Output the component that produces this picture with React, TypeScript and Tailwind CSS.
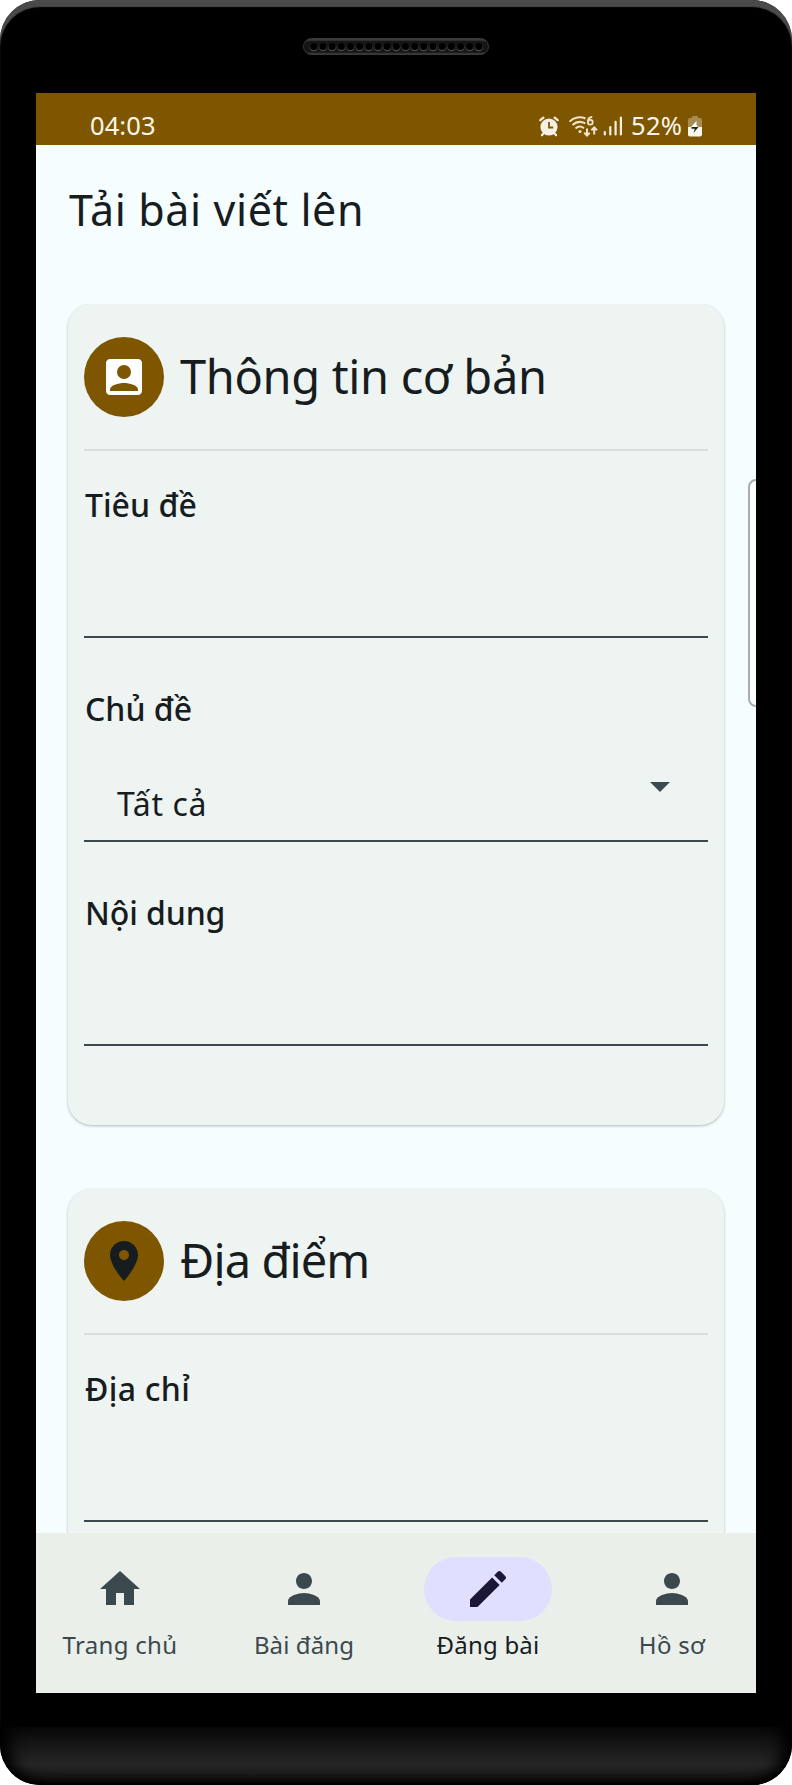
import type { ReactNode } from "react";

const HOLES = Array.from({ length: 19 }, (_, i) => i);

function Speaker() {
  return (
    <svg width="186" height="18" viewBox="0 0 186 18">
      <defs>
        <linearGradient id="grille" x1="0" y1="0" x2="0" y2="1">
          <stop offset="0" stopColor="#484848" />
          <stop offset="0.25" stopColor="#161616" />
          <stop offset="0.8" stopColor="#101010" />
          <stop offset="1" stopColor="#484848" />
        </linearGradient>
      </defs>
      <rect x="0.5" y="0.5" width="185" height="16" rx="8" fill="url(#grille)" stroke="#383838" />
      <rect x="2.5" y="3" width="181" height="11.500" rx="5.750" fill="#161616" />
      {HOLES.map((i) => (
        <g key={i}>
          <circle cx={10.8 + i * 9.17} cy="9.3" r="3.9" fill="#4a4a4a" />
          <circle cx={10.8 + i * 9.17} cy="8.5" r="3.6" fill="#000000" />
        </g>
      ))}
    </svg>
  );
}

function StatusIcons() {
  return (
    <svg width="84" height="22" viewBox="0 0 84 22" fill="none">
      <g fill="#f5f0e6" stroke="#f5f0e6">
        <circle cx="10" cy="11" r="8.600" stroke="none" />
        <path d="M4.400 17.500 2.900 19.200M15.600 17.500l1.500 1.700" strokeWidth="2.200" strokeLinecap="round" />
        <path d="M1.300 4.200 4.400 1.600M18.700 4.200 15.600 1.600" strokeWidth="2.200" strokeLinecap="round" />
        <path d="M10 6v5.500h4.200" fill="none" stroke="#7f5600" strokeWidth="1.800" />
      </g>
      <g stroke="#efe3cb" strokeWidth="2" fill="none">
        <path d="M30.500 5.600C35 1 41.500 .2 46.500 2.500" />
        <path d="M33.500 9C37 5.700 42 5.200 46.300 7.400" />
        <path d="M36.500 12.400c2.500-2.200 5.800-2.300 8.400-.2" />
        <path d="M53.200 1C50.300 1.200 48.900 3 48.900 5.700" strokeWidth="1.800" />
        <circle cx="51.300" cy="6.300" r="2.400" strokeWidth="1.800" />
        <circle cx="41" cy="15.500" r="1.500" fill="#efe3cb" stroke="none" />
        <path d="M48 12.500v7M45.300 16.800l2.700 2.800 2.700-2.800" />
        <path d="M55.200 18.500v-7M52.400 14.200l2.800-2.800 2.800 2.800" />
      </g>
      <g stroke="#f5f0e6" strokeWidth="2.200" strokeLinecap="round">
        <path d="M65.800 16.200v2.200M71.300 11v7.400M76.600 5.800v12.600M81.900 1.500v16.900" />
      </g>
    </svg>
  );
}

function Battery() {
  return (
    <svg width="14" height="22" viewBox="0 0 14 22">
      <path d="M4.200 0h5.600v2H12a2 2 0 0 1 2 2v7.500H0V4a2 2 0 0 1 2-2h2.200z" fill="#a98c55" />
      <path d="M0 11h14v7.500a2 2 0 0 1-2 2H2a2 2 0 0 1-2-2z" fill="#fbf8f0" />
      <path d="M8.500 5 3 11h5.500l2-1-2-.5z" fill="#ffffff" />
      <path d="M3.500 11H10.500L5.500 17l1.300-4.300H3.500z" fill="#26221a" />
    </svg>
  );
}

function MaterialIcon({ d, color }: { d: string; color: string }) {
  return (
    <svg width="48" height="48" viewBox="0 0 24 24" fill={color}>
      <path d={d} />
    </svg>
  );
}

const ACCOUNT_BOX =
  "M3 5v14c0 1.100.9 2 2 2h14c1.100 0 2-.9 2-2V5c0-1.100-.9-2-2-2H5c-1.110 0-2 .9-2 2z";
const PLACE =
  "M12 2C8.130 2 5 5.130 5 9c0 5.250 7 13 7 13s7-7.750 7-13c0-3.870-3.130-7-7-7zm0 9.500c-1.380 0-2.500-1.120-2.500-2.500s1.120-2.500 2.500-2.500 2.500 1.120 2.500 2.500-1.120 2.500-2.500 2.500z";
const HOME = "M10 20v-6h4v6h5v-8h3L12 3 2 12h3v8z";
const PERSON =
  "M12 12c2.210 0 4-1.790 4-4s-1.790-4-4-4-4 1.790-4 4 1.790 4 4 4zm0 2c-2.670 0-8 1.340-8 4v2h16v-2c0-2.660-5.330-4-8-4z";
const EDIT =
  "M3 17.250V21h3.750L17.810 9.940l-3.750-3.750L3 17.250zM20.710 7.040c.39-.39.39-1.020 0-1.410l-2.340-2.340c-.39-.39-1.020-.39-1.410 0l-1.830 1.830 3.750 3.750 1.830-1.830z";

function AccountIcon() {
  return (
    <svg width="48" height="48" viewBox="0 0 24 24">
      <path d={ACCOUNT_BOX} fill="#ffffff" />
      <circle cx="12" cy="9.500" r="3.500" fill="#7f5600" />
      <path d="M5 18.200C5 16.200 9.200 15 12 15s7 1.200 7 3.200V19H5z" fill="#7f5600" />
    </svg>
  );
}

function SectionHeader({ icon, title, spacing }: { icon: ReactNode; title: string; spacing: string }) {
  return (
    <div className="box-content flex h-[112px] shrink-0 items-start gap-4 border-b-2 border-[#d8dfdc]">
      <div className="flex size-20 items-center justify-center rounded-full bg-[#7f5600]">{icon}</div>
      <h2 className={`text-[47px] leading-[78px] font-normal whitespace-nowrap ${spacing}`}>{title}</h2>
    </div>
  );
}

function Field({ label, spacing, children }: { label: string; spacing: string; children?: ReactNode }) {
  return (
    <div className="flex h-[158px] shrink-0 flex-col border-b-2 border-[#3c494e]">
      <div className={`pl-px text-[32px] leading-[50px] font-medium whitespace-nowrap ${spacing}`}>{label}</div>
      {children}
    </div>
  );
}

function NavItem({ icon, label, active, spacing }: { icon: ReactNode; label: string; active?: boolean; spacing: string }) {
  return (
    <div className={`flex flex-col items-center ${active ? "text-[#171d1f]" : "text-[#3b494e]"}`}>
      <div className={`flex h-16 w-32 items-center justify-center rounded-full ${active ? "bg-[#e1dfff]" : ""}`}>
        {icon}
      </div>
      <span className={`mt-2 text-[24px] leading-8 whitespace-nowrap ${spacing}`}>{label}</span>
    </div>
  );
}

export default function App() {
  return (
    <div className="h-[1785px] w-[792px] bg-white font-['Noto_Sans',sans-serif] text-[#171d1f]">
      <div className="relative flex h-full flex-col overflow-hidden rounded-[40px] bg-black shadow-[inset_0_7px_1px_#4a4a4a]">
        <div className="flex h-[93px] shrink-0 justify-center pt-[38px]">
          <Speaker />
        </div>

        <div className="relative mx-9 flex h-[1600px] shrink-0 flex-col overflow-hidden bg-[#f5fdff]">
          <div className="flex h-[52px] shrink-0 items-start bg-[#7f5600] px-[54px] pt-[14px] text-[25.5px] leading-9 text-[#fbf6ec]">
            <span className="tracking-[0.1px]">04:03</span>
            <div className="ml-auto flex items-start">
              <div className="mt-[9px]"><StatusIcons /></div>
              <span className="ml-2 w-[57px] tracking-[0.3px]">52%</span>
              <div className="mt-[9px]"><Battery /></div>
            </div>
          </div>

          <h1 className="mt-[33px] ml-[33px] h-[126px] shrink-0 text-[43px] leading-[64px] font-normal tracking-[0.6px] whitespace-nowrap">
            Tải bài viết lên
          </h1>

          <div className="flex min-h-0 flex-1 flex-col gap-16 overflow-hidden px-8">
            <section className="flex h-[821px] shrink-0 flex-col rounded-[24px] bg-[#eef4f2] px-4 pt-[33px] shadow-[0_1px_3px_rgba(0,0,0,0.28)]">
              <SectionHeader icon={<AccountIcon />} title="Thông tin cơ bản" spacing="tracking-[-0.35px]" />
              <div className="flex flex-col gap-[46px] pt-[29px]">
                <Field label="Tiêu đề" spacing="tracking-[0px]" />
                <Field label="Chủ đề" spacing="tracking-[0px]">
                  <div className="flex items-start justify-between pr-[38px] pl-[33px]">
                    <span className="mt-[46px] text-[32px] leading-[48px] tracking-[0.6px]">Tất cả</span>
                    <svg className="mt-12" width="20" height="10" viewBox="0 0 20 10">
                      <path d="M0 0h20L10 10z" fill="#3c494e" />
                    </svg>
                  </div>
                </Field>
                <Field label="Nội dung" spacing="tracking-[-0.1px]" />
              </div>
            </section>

            <section className="flex h-[821px] shrink-0 flex-col rounded-[24px] bg-[#eef4f2] px-4 pt-8 shadow-[0_1px_3px_rgba(0,0,0,0.28)]">
              <SectionHeader icon={<MaterialIcon d={PLACE} color="#171d1f" />} title="Địa điểm" spacing="tracking-[-0.9px]" />
              <div className="pt-[29px]">
                <Field label="Địa chỉ" spacing="tracking-[0.3px]" />
              </div>
            </section>
          </div>

          <nav className="grid h-40 shrink-0 grid-cols-4 gap-4 bg-[#eaefea] pt-6">
            <NavItem icon={<MaterialIcon d={HOME} color="#3b494e" />} label="Trang chủ" spacing="tracking-[0.3px]" />
            <NavItem icon={<MaterialIcon d={PERSON} color="#3b494e" />} label="Bài đăng" spacing="tracking-[0.1px]" />
            <NavItem icon={<MaterialIcon d={EDIT} color="#1a1836" />} label="Đăng bài" active spacing="tracking-[0.2px]" />
            <NavItem icon={<MaterialIcon d={PERSON} color="#3b494e" />} label="Hồ sơ" spacing="tracking-[0.3px]" />
          </nav>

          <div className="absolute top-[386px] -right-2 h-[228px] w-4 rounded-[8px] border-2 border-[#a9acad] bg-[#fafeff]" />
        </div>

        <div className="mt-[34px] flex-1 rounded-b-[40px] bg-linear-to-b from-[#090909] via-[#262626] via-65% to-[#0c0c0c]">
          <div className="h-full rounded-b-[40px] shadow-[inset_18px_0_16px_-8px_#000,inset_-18px_0_16px_-8px_#000,inset_0_-5px_6px_-2px_#000]" />
        </div>
      </div>
    </div>
  );
}
